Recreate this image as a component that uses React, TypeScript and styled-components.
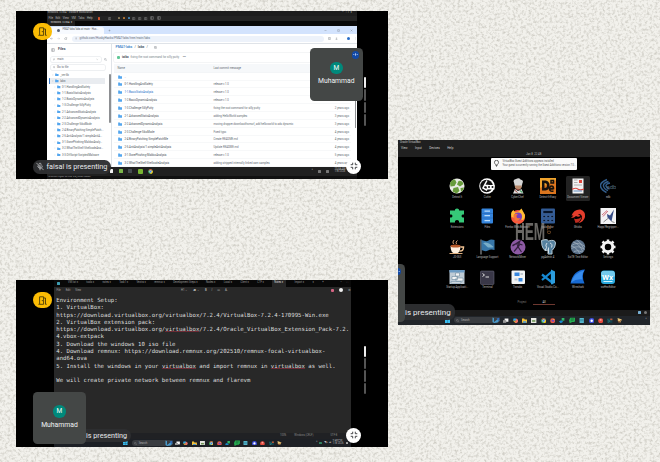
import React from "react";
import styled, { createGlobalStyle } from "styled-components";

const Global = createGlobalStyle`
  * { box-sizing: border-box; }
  body { margin: 0; background: #efefe9; font-family: Roboto, "Open Sans", sans-serif; }
`;

/* ---------- page ---------- */
const Page = styled.main`
  position: relative; width: 660px; height: 462px; overflow: hidden;
  display: flex; align-items: flex-start; gap: 10px; padding: 11px 10px 0 16px;
`;
const Paper = styled.svg`position: absolute; inset: 0; width: 660px; height: 462px;`;
const Column = styled.div`display: flex; flex-direction: column; gap: 101px; width: 372px; position: relative;`;
const Side = styled.div`width: 252px; margin-top: 129px; position: relative;`;
const Screen = styled.section<{ $h: number; $l?: number; $r?: number }>`
  position: relative; overflow: hidden; background: #000; height: ${(p) => p.$h}px;
  padding: 0 ${(p) => p.$r ?? 0}px 0 ${(p) => p.$l ?? 0}px; display: flex; flex-direction: column;
`;
const Bar = styled.div<{ $h: number; $bg?: string; $pl?: number; $gap?: number; $c?: string; $fs?: number }>`
  display: flex; align-items: center; flex: none; white-space: nowrap; overflow: hidden;
  height: ${(p) => p.$h}px; background: ${(p) => p.$bg ?? "transparent"};
  padding-left: ${(p) => p.$pl ?? 0}px; gap: ${(p) => p.$gap ?? 3}px;
  color: ${(p) => p.$c ?? "#b5b5b5"}; font-size: ${(p) => p.$fs ?? 2.6}px; line-height: 1;
`;
const Grow = styled.span`flex: 1;`;
const Space = styled.span<{ $w: number }>`width: ${(p) => p.$w}px; flex: none;`;

/* ---------- meeting overlays ---------- */
const DoorBadge = styled.div<{ $top: number }>`
  position: absolute; left: 17px; top: ${(p) => p.$top}px; width: 18.5px; height: 16.5px;
  border-radius: 8.2px; background: #fbbc04; display: grid; place-items: center;
`;
const Tile = styled.div<{ $x: number; $y: number }>`
  position: absolute; left: ${(p) => p.$x}px; top: ${(p) => p.$y}px; width: 52.5px; height: 52.5px;
  border-radius: 4.5px; background: #444746; display: flex; flex-direction: column; align-items: center;
  padding-top: 13.8px; gap: 2.8px; color: #f1f3f4; font-size: 6.8px; line-height: 9px;
`;
const Avatar = styled.div`
  width: 12.5px; height: 12.5px; border-radius: 50%; background: #00897b; color: #fff;
  display: grid; place-items: center; font-size: 6.5px; line-height: 1;
`;
const Speaking = styled.div<{ $x: number; $y: number }>`
  position: absolute; left: ${(p) => p.$x}px; top: ${(p) => p.$y}px; width: 7.5px; height: 7.5px; border-radius: 50%;
  background: #134aa5; display: grid; place-items: center;
`;
const Presenting = styled.div<{ $x: number; $y: number; $w: number; $h: number; $pl: number; $fs: number }>`
  position: absolute; left: ${(p) => p.$x}px; top: ${(p) => p.$y}px; width: ${(p) => p.$w}px; height: ${(p) => p.$h}px;
  padding-left: ${(p) => p.$pl}px; border-radius: 6.5px; background: rgba(46,47,49,.96); color: #e8eaed;
  display: flex; align-items: center; gap: 3px; font-size: ${(p) => p.$fs}px; white-space: nowrap;
`;
const Collapse = styled.div<{ $top: number }>`
  position: absolute; left: 330.3px; top: ${(p) => p.$top}px; width: 15px; height: 15px; border-radius: 50%;
  background: #fff; display: grid; place-items: center;
`;
const Levels = styled.div<{ $top: number }>`
  position: absolute; left: 347.5px; top: ${(p) => p.$top}px; display: flex; flex-direction: column; gap: 1px;
  i { width: 2px; height: 11.4px; border-radius: 1px; background: #555; } i:first-child { background: #eee; }
`;

const Door = () => (
  <svg width="9" height="9" viewBox="0 0 9 9" fill="none" stroke="#4a3b08" strokeWidth=".9">
    <path d="M.4 8.3h1.2V.8h4V8.3M5.6 2h1.9v6.3h1.2M1.6 8.3h4M4.3 4v1.2" />
  </svg>
);
const MicOff = () => (
  <svg width="8" height="9" viewBox="0 0 24 24" fill="none" stroke="#d5d7da" strokeWidth="2" strokeLinecap="round">
    <path d="M2 2l20 20M9 5a3 3 0 0 1 6 0v6M9 9v3a3 3 0 0 0 4 2.8M5 11a7 7 0 0 0 10.5 6M19 11a7 7 0 0 1-.6 3M12 18v4" />
  </svg>
);
const CollapseIcon = () => (
  <svg width="8" height="8" viewBox="0 0 8 8" fill="none" stroke="#3c3d40" strokeWidth=".95">
    <path d="M.7 2.7h2v-2M5.3.7v2h2M.7 5.3h2v2M7.3 5.3h-2v2" />
  </svg>
);
const SpeakingDot = ({ x, y }: { x: number; y: number }) => (
  <Speaking $x={x} $y={y}><svg width="5" height="3" viewBox="0 0 5 3"><path d="M.8 1v1M2.5.3v2.4M4.2 1v1" stroke="#cfe0ff" strokeWidth=".8" /></svg></Speaking>
);
const Participant = ({ x, y }: { x: number; y: number }) => (
  <Tile $x={x} $y={y}><Avatar>M</Avatar><span>Muhammad</span></Tile>
);
const VolumeLevels = ({ top }: { top: number }) => <Levels $top={top}><i /><i /><i /><i /></Levels>;

/* ---------- small glyphs ---------- */
const Dot = styled.span<{ $c: string; $s?: number; $r?: number }>`
  width: ${(p) => p.$s ?? 3}px; height: ${(p) => p.$s ?? 3}px; background: ${(p) => p.$c};
  border-radius: ${(p) => p.$r ?? 0.5}px; flex: none;
`;
const Stroke = ({ d, s = 3.4, c = "#6a7077", w = 2.5 }: { d: string; s?: number; c?: string; w?: number }) => (
  <svg width={s} height={s} viewBox="0 0 24 24" fill="none" stroke={c} strokeWidth={w}><path d={d} /></svg>
);
const Folder = ({ s = 4.2 }: { s?: number }) => (
  <svg width={s} height={s} viewBox="0 0 10 10"><path d="M.4 1.4h3.8l1 1.3h4.4v6.4H.4z" fill="#54a6ee" /></svg>
);
const SEARCH = "M16 16l6 6M10 3a7 7 0 1 1 0 14a7 7 0 0 1 0-14";
const CLOSE = "M5 5l14 14M19 5L5 19";
const CHEVRON = "M9 5l7 7-7 7";
const DOWN = "M5 9l7 7 7-7";
const BOX = "M4 4h16v16H4zM10 4v16";

/* ---------- browser ---------- */
const Browser = styled.div`height: 141px; background: #fff; display: flex; flex-direction: column; overflow: hidden;`;
const Tab = styled.div`
  height: 7px; width: 54px; flex: none; margin-top: 1.5px; border-radius: 2.5px 2.5px 0 0; background: #f7faff;
  display: flex; align-items: center; gap: 3px; padding: 0 4px 0 7px; color: #4d5560; font-size: 2.6px; white-space: nowrap;
`;
const Address = styled.div`
  display: flex; align-items: center; width: 254px; height: 6px; border-radius: 3px; background: #edf2fa;
  padding-left: 3px; gap: 2px; color: #667080; font-size: 3.05px;
`;
const BrowserBody = styled.div`flex: 1; display: flex; border-top: .5px solid #dfe3e8; min-height: 0;`;
const Sidebar = styled.div`
  width: 65px; border-right: .5px solid #dfe3e8; display: flex; flex-direction: column; overflow: hidden; position: relative;
`;
const Field = styled.div<{ $w?: number }>`
  width: ${(p) => p.$w ?? 50}px; height: 5.5px; box-shadow: 0 0 0 .5px #dde1e6; border-radius: 1px;
  display: flex; align-items: center; gap: 2px; padding: 0 2px; font-size: 2.9px; color: #626a73;
`;
const TreeRow = styled.div<{ $on?: boolean; $d?: number }>`
  height: 6.17px; flex: none; margin: 0 6px 0 2px; padding-left: ${(p) => (p.$d ? 4 : 2)}px;
  background: ${(p) => (p.$on ? "#e9ecf0" : "transparent")}; border-left: .8px solid ${(p) => (p.$on ? "#3577c8" : "transparent")};
  display: flex; align-items: center; gap: 1.5px; font-size: 2.75px; color: #555c65; white-space: nowrap; border-radius: .5px;
`;
const Scroll = styled.span<{ $x: number; $y: number; $h: number }>`
  position: absolute; left: ${(p) => p.$x}px; top: ${(p) => p.$y}px; width: 1.8px; height: ${(p) => p.$h}px; border-radius: 1px; background: #8d8f92;
`;
const Content = styled.div`flex: 1; min-width: 0; padding: 0 6px 0 2px; display: flex; flex-direction: column; position: relative;`;
const Crumb = styled.div`height: 9px; padding: 0 0 2px 2px; display: flex; align-items: center; gap: 2px; font-size: 3.5px; color: #55606c; b { color: #3578c4; font-weight: 500; }`;
const Commit = styled.div`
  height: 9px; box-shadow: 0 0 0 .5px #e9ebee; border-radius: 1px; display: flex; align-items: center; gap: 2px;
  padding-left: 3px; font-size: 2.9px; color: #777f88; b { color: #454c54; }
`;
const FileRow = styled.div<{ $head?: boolean }>`
  height: ${(p) => (p.$head ? 8.4 : 7.86)}px; flex: none; box-shadow: inset 0 -.5px #f0f1f4; background: ${(p) => (p.$head ? "#f6f8fa" : "transparent")};
  display: grid; grid-template-columns: ${(p) => (p.$head ? "96px" : "7px 89px")} 1fr auto; align-items: center;
  padding: 0 2px 0 4px; font-size: 2.78px; color: #646b73; white-space: nowrap;
`;
const FileName = styled.span<{ $link?: boolean }>`
  color: ${(p) => (p.$link ? "#2871c9" : "#4b525a")};
`;

const files: [string, string, string][] = [
  ["0-1.HandlingAndSafety", "release v.1.0", ""],
  ["1-1.BasicStaticAnalysis", "release v.1.0", ""],
  ["1-2.BasicDynamicAnalysis", "release v.1.0", ""],
  ["1-3.Challenge-SillyPutty", "fixing the root command for silly putty", "2 years ago"],
  ["2-1.AdvancedStaticAnalysis", "adding HelloWorld samples", "3 years ago"],
  ["2-2.AdvancedDynamicAnalysis", "moving dropper.downloadfromurl, add helloworld to ads dynamic", "3 years ago"],
  ["2-3.Challenge-SikoMode", "Fixed typo", "4 years ago"],
  ["2-4.BinaryPatching-SimplePatchMe", "Create README.md", "4 years ago"],
  ["2-5.AntiAnalysis/1.simpleAntiAnalysis", "Update README.md", "4 years ago"],
  ["3-1.GonePhishing-MaldocAnalysis", "release v.1.0", "5 years ago"],
  ["3-2.WhatTheShell-ShellcodeAnalysis", "adding stripped internally linked asm samples", "4 years ago"],
];
const tree = ["0-1.HandlingAndSafety", "1-1.BasicStaticAnalysis", "1-2.BasicDynamicAnalysis", "1-3.Challenge-SillyPutty",
  "2-1.AdvancedStaticAnalysis", "2-2.AdvancedDynamicAnalysis", "2-3.Challenge-SikoMode", "2-4.BinaryPatching-SimplePatch...",
  "2-5.AntiAnalysis/1.simpleAntiA...", "3-1.GonePhishing-MaldocAnaly...", "3-2.WhatTheShell-ShellcodeAna...", "3-3.OffScript-ScriptedMalware"];

const GithubScreen = () => (
  <Screen $h={168} $l={30.5} $r={31}>
    <Bar $h={4.5} $bg="#1d1d1d" $pl={1} $fs={2.6}>Windows 10 x64 - VMware Workstation<Grow />– &nbsp; ❐ &nbsp; ×<Space $w={2} /></Bar>
    <Bar $h={5.5} $bg="#232323" $pl={2} $gap={2.6} $fs={2.8}>
      <span>File</span><span>Edit</span><span>View</span><span>VM</span><span>Tabs</span><span>Help</span><Space $w={0} />
      <Dot $c="#d0532b" $s={2.6} /><Space $w={2} /><Stroke d={BOX} c="#aaa" /><Space $w={2} />
      <Dot $c="#8a7a58" $s={2} /><Dot $c="#b47533" $s={2.2} /><Dot $c="#4384b5" $s={2.2} />
      <Stroke d={BOX} c="#aaa" /><Stroke d={BOX} c="#aaa" /><Stroke d={BOX} c="#aaa" /><Stroke d={BOX} c="#aaa" s={4} /><Stroke d={BOX} c="#aaa" s={4} />
    </Bar>
    <Bar $h={5} $bg="#080808"><Bar $h={5} $bg="#202020" $pl={4} $c="#ddd" $fs={2.6}>Windows 10 x64 &nbsp;×<Space $w={0} /></Bar></Bar>
    <Browser>
      <Bar $h={8} $bg="#d3e3fd" $pl={3} $gap={4}>
        <Tab><Dot $c="#596579" $s={3} $r={2} />FMAT-labs/labs at main · Hus...<Grow /><Stroke d={CLOSE} s={2.6} /></Tab>
        <Stroke d="M12 4v16M4 12h16" s={3} /><Grow /><Stroke d="M4 12h16" s={3} /><Space $w={2} /><Stroke d="M5 5h14v14H5z" s={3} /><Space $w={2} /><Stroke d={CLOSE} s={3} /><Space $w={0} />
      </Bar>
      <Bar $h={9} $pl={3.5} $gap={4}>
        <Stroke d="M21 12H4M11 5l-7 7 7 7" s={3.2} /><Stroke d="M3 12h17M13 5l7 7-7 7" s={3.2} c="#adb2b9" /><Stroke d="M19 8a8 8 0 1 0 1 7M20 3v6h-6" s={3.4} />
        <Address><Stroke d="M3 8h18M3 16h18" s={2.8} />github.com/HuskyHacks/PMAT-labs/tree/main/labs</Address>
        <Stroke d={BOX} s={3} /><Stroke d="M12 3v13M6 11l6 6 6-6M4 21h16" s={3} /><Space $w={1} /><Dot $c="#286cc7" $s={3.3} $r={2} /><Stroke d="M12 3v3M12 10v3M12 18v3" s={3} />
      </Bar>
      <BrowserBody>
        <Sidebar>
          <Bar $h={11.5} $pl={4.5} $c="#444b53" $fs={3.6}><Stroke d={BOX} s={4} /><b>Files</b></Bar>
          <Bar $h={8} $pl={4} $gap={3}><Field><Stroke d="M6 4v16M17 4v5l-11 6" s={2.8} />main<Grow /><Stroke d={DOWN} s={2.5} /></Field><Stroke d={SEARCH} s={3} /></Bar>
          <Bar $h={8} $pl={4}><Field $w={54}><Stroke d={SEARCH} s={2.6} />Go to file</Field></Bar>
          <TreeRow><Stroke d={CHEVRON} s={2} /><Folder s={3.7} />_vm-lib</TreeRow>
          <TreeRow $on><Stroke d={DOWN} s={2} /><Folder s={3.7} />labs</TreeRow>
          {tree.map((t) => <TreeRow key={t} $d={1}><Stroke d={CHEVRON} s={2} c="#999" /><Folder s={3.5} />{t}</TreeRow>)}
          <Scroll $x={62.3} $y={30} $h={49} />
        </Sidebar>
        <Content>
          <Crumb><b>PMAT-labs</b> / <strong>labs</strong> / <Space $w={2} /><Stroke d="M8 8h13v13H8zM3 16V3h13" s={3.6} /></Crumb>
          <Commit><Dot $c="#62c797" $s={3.6} $r={1} /><b>taiko</b> fixing the root command for silly putty &nbsp;<b>•••</b></Commit>
          <Bar $h={2.5} />
          <FileRow $head><span>Name</span><span>Last commit message</span><span>Last commit date</span></FileRow>
          <FileRow><Folder /><span>..</span></FileRow>
          {files.map(([n, m, d], i) => <FileRow key={n}><Folder /><FileName $link={i === 1}>{n}</FileName><span>{m}</span><span>{d}</span></FileRow>)}
          <Scroll $x={243.2} $y={48} $h={36} />
        </Content>
      </BrowserBody>
    </Browser>
    <Bar $h={8.5} $bg="#202020" $pl={63} $gap={5.5}>
      <Dot $c="#f2f2f2" $s={3.8} /><Dot $c="#7cb64b" $s={4} /><Dot $c="#454b50" $s={4} />
      <Dot $c="#79b532" $s={5} $r={1} /><Chrome s={5} />
      <Grow /><span>^</span><Dot $c="#777" $s={2.5} /><Dot $c="#777" $s={2.5} /><span>10:58 AM<br />1/8/2026</span><Space $w={6} />
    </Bar>
    <Bar $h={3.5} $bg="#111" $pl={1} $fs={2.6}>To direct input to this VM, click inside.</Bar>
    <DoorBadge $top={12}><Door /></DoorBadge>
    <Participant x={294} y={37} /><SpeakingDot x={335.8} y={40} />
    <VolumeLevels top={66} />
    <Presenting $x={16.5} $y={148.5} $w={78} $h={14} $pl={3} $fs={7.25}><MicOff />faisal is presenting</Presenting>
    <Collapse $top={147.8}><CollapseIcon /></Collapse>
  </Screen>
);

/* ---------- taskbar icons ---------- */
function Chrome({ s = 5 }: { s?: number }) {
  return <svg width={s} height={s} viewBox="0 0 20 20"><circle cx="10" cy="10" r="9.5" fill="#34a853" /><path d="M1.6 5.4A9.6 9.6 0 0 1 18.6 6H10z" fill="#ea4335" /><path d="M18.8 6A9.6 9.6 0 0 1 9 19.5L14 10z" fill="#fbbc04" /><circle cx="10" cy="10" r="4.5" fill="#4285f4" stroke="#fff" strokeWidth="1.6" /></svg>;
}
const Windows = ({ s }: { s: number }) => (
  <svg width={s} height={s} viewBox="0 0 9 9" fill="#38bdf0"><path d="M0 0h4.3v4.3H0zM4.7 0H9v4.3H4.7zM0 4.7h4.3V9H0zM4.7 4.7H9V9H4.7z" /></svg>
);
const Dock = styled.div<{ $gap: number }>`display: flex; align-items: center; gap: ${(p) => p.$gap}px; svg { display: block; }`;
const SearchBox = styled.div<{ $w: number }>`
  width: ${(p) => p.$w}px; height: 6px; border-radius: 3px; background: #393c40; display: flex; align-items: center; gap: 2px; padding-left: 2px; color: #aaa; font-size: 2.8px;
`;
const DockIcons = ({ s, gap }: { s: number; gap: number }) => (
  <Dock $gap={gap}>
    <svg width={s} height={s} viewBox="0 0 10 10"><path d="M3 1h7v6H3z" fill="#f3f3f3" /><path d="M0 4h6v5H0z" fill="#999" /></svg>
    <svg width={s} height={s} viewBox="0 0 10 10"><path d="M1 1h5l1 4H0z" fill="#29a7ed" /><path d="M6 1l4 3-2 5-5 1z" fill="#ed6f66" /><path d="M0 5h5l-1 4z" fill="#ddb52f" /></svg>
    <svg width={s} height={s} viewBox="0 0 10 10"><path d="M0 1h4l1 2h5v6H0z" fill="#f5c13a" /><path d="M2 6h6v3H2z" fill="#4a99d8" /></svg>
    <svg width={s} height={s} viewBox="0 0 10 10"><path d="M0 0h10v10H0z" fill="#e5e6df" /><path d="M2 4h6v3H2z" fill="#6d9555" /></svg>
    <Chrome s={s} />
    <svg width={s} height={s} viewBox="0 0 10 10"><circle cx="5" cy="5" r="4.6" fill="#ef5942" /><circle cx="5.5" cy="4.5" r="2.4" fill="#7546bc" /><path d="M1 1l3 2 5-1-2 2z" fill="#ffb637" /></svg>
    <svg width={s} height={s} viewBox="0 0 10 10"><path d="M5 0h5v5H5z" fill="#2fb66a" /><path d="M0 6l4-2 4 3-5 3z" fill="#1989cb" /></svg>
    <svg width={s + 1} height={s + 1} viewBox="0 0 10 10"><path d="M2 1h8v5L8 8H5L1 10 0 5z" fill="#25ad51" /><path d="M3 3h5M3 5h4" stroke="#145c31" /></svg>
    <svg width={s} height={s} viewBox="0 0 10 10"><path d="M1 0h8v10H1z" fill="#56b6cd" /><path d="M2 3h6M2 5h6" stroke="#287b91" /></svg>
    <svg width={s} height={s} viewBox="0 0 10 10"><circle cx="5" cy="5" r="5" fill="#3b4cdd" /><circle cx="5" cy="5" r="2.3" fill="#fff" /></svg>
    <svg width={s} height={s} viewBox="0 0 10 10"><circle cx="5" cy="5" r="4.7" fill="#e64a3d" /><circle cx="5" cy="3.5" r="1.8" fill="#f2a39c" /></svg>
    <svg width={s} height={s} viewBox="0 0 10 10"><path d="M0 1h10v8H0z" fill="#12424c" /><path d="M6 1h4v3H6z" fill="#c15532" /><path d="M2 3l3 3-3 2" stroke="#4cb3ac" fill="none" /></svg>
    <svg width={s} height={s} viewBox="0 0 10 10"><path d="M1 0l8 3-2 4-5-1z" fill="#e6c577" /><path d="M3 9l5-6M1 5l6 4" stroke="#9a6034" strokeWidth="1.5" /></svg>
  </Dock>
);
const Bing = () => <svg width="8" height="6" viewBox="0 0 16 12"><path d="M1 1l3 1v8l4-3 5-4 2 4-4 4-7 1-3-2z" fill="#4999c9" /><path d="M9 3l6-2-1 8z" fill="#3069b4" /></svg>;

/* ---------- notepad ---------- */
const NoteBody = styled.div`
  height: 139.5px; background: #282828; padding: 3.5px 0 0 2.3px; color: #dedede; overflow: hidden; white-space: pre;
  font-family: "DejaVu Sans Mono", "Liberation Mono", monospace; font-size: 5.66px; line-height: 7.28px;
`;
const Typo = styled.span`background: linear-gradient(#8c2c3c, #8c2c3c) 0 100% / 100% .7px no-repeat;`;
const noteTabs = ["VM list  ×", "tools  ×", "notes  ×", "Task1  ×", "Vectra  ×", "remnux  ×", "Development Steps  ×", "Nodes  ×", "Local  ×", "Client  ×", "CTF  ×"];
const NotepadScreen = () => (
  <Screen $h={167} $l={38} $r={37}>
    <Bar $h={7} $bg="#090909" $pl={2.5} $gap={8.3} $c="#969696" $fs={2.6}>
      <Dot $c="#3e9cb1" $s={3.2} />{noteTabs.map((t) => <span key={t}>{t}</span>)}
      <Bar $h={7} $bg="#272727" $pl={2} $c="#ddd" $fs={2.6}>Notes ×<Space $w={0} /></Bar><span>Import ×</span><span>×</span><span>+</span><Grow /><span>–&nbsp; &nbsp; &nbsp; &nbsp;□&nbsp; &nbsp; &nbsp; &nbsp;×&nbsp; &nbsp; &nbsp;</span>
    </Bar>
    <Bar $h={6.5} $bg="#282828" $pl={2.5} $gap={5} $c="#aaa" $fs={2.7}>
      <span>File</span><span>Edit</span><span>View</span><Space $w={90} /><span>H1 ⌄</span><span>≔ ⌄</span><b>B</b><i>I</i><span>∞</span><span>A̶</span>
      <Grow /><Dot $c="#d66483" $s={3.3} $r={1} /><Dot $c="#f1f1f1" $s={4} $r={3} /><span>⚙</span>
    </Bar>
    <NoteBody>
{`Environment Setup:
1. VirtualBox:
https://download.virtualbox.org/virtualbox/7.2.4/VirtualBox-7.2.4-170995-Win.exe
2. VirtualBox extension pack:
https://download.virtualbox.org/`}<Typo>virtualbox</Typo>{`/7.2.4/Oracle_VirtualBox_Extension_Pack-7.2.
4.vbox-extpack
3. Download the windows 10 iso file
4. Download remnux: https://download.remnux.org/202510/remnux-focal-virtualbox-
and64.ova
5. Install the windows in your `}<Typo>virtualbox</Typo>{` and import remnux in `}<Typo>virtualbox</Typo>{` as well.

We will create private network between remnux and flarevm`}
    </NoteBody>
    <Bar $h={6} $bg="#202124" $pl={226} $gap={8} $c="#898989" $fs={2.6}><span>100%</span><span>Windows (CRLF)</span><Space $w={1} /><span>UTF-8</span></Bar>
    <Bar $h={8} $bg="#1d2025" $pl={5} $gap={2}>
      <Dot $c="#c9572d" $s={2.5} /><span>34°C</span><Space $w={50} /><Windows s={4.6} /><Space $w={0} />
      <SearchBox $w={41}><Stroke d={SEARCH} s={3} c="#aaa" />Search<Grow /><Bing /></SearchBox>
      <DockIcons s={4.9} gap={3.58} /><Grow /><span>^</span><Dot $c="#318261" $s={2.5} /><span>◥ ◖ ▰</span><span>9:48 PM<br />1/8/2026</span><Dot $c="#aaa" $s={2.5} /><Space $w={1} />
    </Bar>
    <DoorBadge $top={11.8}><Door /></DoorBadge>
    <VolumeLevels top={65.5} />
    <Presenting $x={17} $y={148.8} $w={97.5} $h={13.5} $pl={53} $fs={7.2}>is presenting</Presenting>
    <Participant x={17.2} y={111.7} />
    <Collapse $top={147.8}><CollapseIcon /></Collapse>
  </Screen>
);

/* ---------- virtual machine launcher ---------- */
const Desktop = styled.div`position: relative; height: 153px; background: #000; padding: 19.2px 0 0 44.1px;`;
const Apps = styled.div`display: grid; grid-template-columns: repeat(6, 30.2px); grid-auto-rows: 30.2px;`;
const Launcher = styled.div<{ $on?: boolean }>`
  display: flex; flex-direction: column; align-items: center; gap: 1.4px; color: #bbb; font-size: 2.7px; line-height: 3.5px; white-space: nowrap;
  padding-top: 2px; margin: 0 3px; height: 24.5px; border-radius: 1.5px; background: ${(p) => (p.$on ? "#222" : "transparent")};
  svg { display: block; }
`;
const Watermark = styled.div`
  position: absolute; left: 116.5px; top: 62px; color: rgba(160,157,152,.66); font: 700 24px/26px "Liberation Sans", sans-serif;
  letter-spacing: -.3px; transform: scaleX(.57); transform-origin: left; white-space: nowrap;
`;
const WatermarkSide = styled.span`position: absolute; left: 147.5px; top: 68px; color: #80532b; font: 700 5px/5px Roboto, sans-serif; writing-mode: vertical-rl; opacity: .9;`;
const Notice = styled.div`
  position: absolute; left: 93px; top: .5px; width: 85.5px; height: 12.2px; border-radius: 1px; background: #fafafa; color: #555;
  display: flex; align-items: center; gap: 3px; padding-left: 1.5px; font-size: 2.6px; line-height: 4px; white-space: nowrap;
`;
const Pages = styled.div`
  position: absolute; left: 113px; top: 142.5px; width: 44px; display: grid; grid-template-columns: 1fr 1fr; text-align: center; color: #777; font-size: 2.8px; line-height: 4px;
  span:last-child { color: #ddd; box-shadow: 0 .8px #8a463c; }
`;
const EdgeTile = styled.div`position: absolute; left: -10px; top: 123.5px; width: 16.5px; height: 58px; background: #444746; border-radius: 4.5px; z-index: 0;`;

const Art = ({ children }: { children: React.ReactNode }) => <svg width="16" height="16" viewBox="0 0 32 32">{children}</svg>;
const apps: [string, React.ReactNode][] = [
  ["Detect It", <><circle cx="16" cy="16" r="15" fill="#e9ebe4" /><path d="M2 10q4-8 10-7l3 6-4 7-8 1zM19 6q7-2 10 6l-7 5-6-4zM9 20l9-2 3 8-6 5-8-4zM23 20l7-1q-1 7-6 9z" fill="#689b3b" /></>],
  ["Cutter", <><circle cx="16" cy="16" r="15.5" fill="#fff" /><circle cx="15" cy="16" r="12.5" fill="#111" /><path d="M16 5L8 20l7 4 2-4M12 15h7" stroke="#fff" strokeWidth="3" fill="none" /><path d="M14 14h17v9H17z" fill="#fff" /><circle cx="20" cy="18" r="2" fill="#111" /><circle cx="27" cy="18" r="2" fill="#111" /></>],
  ["CyberChef", <><path d="M8 9q-3-6 4-7q6-3 9 1q7 1 4 7l-2 8H10z" fill="#d5d5d5" /><path d="M10 15h13v5q-6 6-13 0z" fill="#b98b6d" /><path d="M6 31l4-9 6 4 7-4 4 9z" fill="#ddd" /><path d="M12 22l8 2M9 24l6 5" stroke="#a14c42" strokeWidth="2" /><path d="M20 25l5 4" stroke="#50a46b" strokeWidth="3" /></>],
  ["Detect-It-Easy", <><path d="M0 0h32v32H0z" fill="#f1a42d" /><path d="M0 20L32 4v28H0z" fill="#dc751e" /><path d="M4 5h7q8 1 8 10t-8 10H4zM9 10v10q5 0 5-5t-5-5" fill="#15110d" fillRule="evenodd" /><path d="M27 22H19q0-6 4-6t4 5H19q0 7 8 5M22 5h5v5h-5z" fill="none" stroke="#15110d" strokeWidth="3" /></>],
  ["Document Viewer", <><path d="M5 1h22v30H5z" fill="#f2f2f2" /><path d="M8 4h7M8 9h7M8 14h16" stroke="#999" strokeWidth="1.5" /><path d="M18 4h6v6h-6z" fill="#df473d" /><path d="M4 21q9-3 12 0t12 0v3q-10 2-13-1t-11 1z" fill="#d54b46" /><path d="M7 25h17v2H7z" fill="#638fc0" /></>],
  ["edb", <><path d="M14 3Q0 9 1 16t12 13M17 7Q6 10 7 16t9 9M20 10q-9 2-8 6t7 6" fill="none" stroke="#315c8b" strokeWidth="3" /><text x="13" y="21" fontSize="12" fontFamily="Roboto" fill="#52677c">edb</text></>],
  ["Extensions", <path d="M2 5h10V3q4-4 8 0v2h10v8h-3q-4 3 0 6h3v10H20v-3q-4-4-8 0v3H2V19h3q4-3 0-6H2z" fill="#36c978" />],
  ["Files", <><rect x="5" y="1" width="23" height="30" rx="2" fill="#3584dc" /><path d="M11 6h11M11 15h11M11 25h11" stroke="#b9dbfb" strokeWidth="2.5" /><path d="M5 11h23M5 20h23" stroke="#245da9" /></>],
  ["Firefox Web Browser", <><circle cx="16" cy="18" r="14" fill="#f8583b" /><path d="M3 18Q0 8 7 4l3 5 7-2 6-6 7 13q0 8-4 10" fill="#ffbd35" /><circle cx="16" cy="17" r="8" fill="#7840bd" /><path d="M7 18q-1-8 9-6-4 2-3 6t8 2q-3 8-11 5z" fill="#f47538" /></>],
  ["galculator", <><rect x="2" y="1" width="28" height="30" rx="2" fill="#315b96" /><path d="M6 5h20v6H6zM6 15h5v4H6zM14 15h5v4h-5zM22 15h5v4h-5zM6 23h5v4H6zM14 23h5v4h-5zM22 23h5v4h-5z" fill="#07152b" stroke="#5177ad" /></>],
  ["Ghidra", <><path d="M3 15Q8 2 21 3q11 4 9 15-3 11-14 12 8-5 8-12-1-7-8-6l5 4q-5 3-9 0-3 4-10 4l5-5z" fill="#e53d2c" /><path d="M8 21q8 3 15-3-2 11-12 12z" fill="#bd2b20" /></>],
  ["Hopp/Regripper...", <><path d="M1 0h31v32H1z" fill="#f3f3f5" /><path d="M4 14l10-9M6 17l10-11" stroke="#c34855" strokeWidth="1.5" /><path d="M14 12l6 3 8-12-3 14-2 10-8-8z" fill="#354c86" /><path d="M7 28l10-8M23 27l6 2" stroke="#666" strokeWidth="1.5" /></>],
  ["JD-GUI", <><path d="M3 14h20q0 15-10 15T3 14" fill="#fff0df" /><path d="M23 16h6q0 9-8 8" fill="none" stroke="#f1c393" strokeWidth="3" /><ellipse cx="13" cy="14" rx="10" ry="3" fill="#b85a2a" /><path d="M9 10q-3-4 1-8M15 10q-3-4 2-7" stroke="#cf9c72" fill="none" strokeWidth="2" /><path d="M1 29h26" stroke="#ddad7e" strokeWidth="2" /></>],
  ["Language Support", <><path d="M4 1v30" stroke="#a2a9ae" strokeWidth="2" /><path d="M5 2q10 4 14 1t12-1v20q-8-2-13 1T5 22z" fill="#3776a8" /><path d="M8 8q7-3 14 2t7 6-11 1z" fill="#79aec9" /></>],
  ["NetworkMiner", <><circle cx="16" cy="16" r="15" fill="#8d5aa4" /><path d="M5 14L20 4l-5 10 8 12M8 25L19 12M5 13q7-6 20-1" fill="none" stroke="#33203d" strokeWidth="2.4" /></>],
  ["pgAdmin 4", <><path d="M3 3q11-4 14 1 13-4 14 4 0 9-7 15v7h-8v-8q-8 4-12-9z" fill="#55819f" stroke="#b5c9d4" strokeWidth="2" /><path d="M14 8q-4 4-1 9l-3 7M20 8q6 2 3 9M17 17v11" stroke="#d3e0e8" strokeWidth="2" fill="none" /></>],
  ["SciTE Text Editor", <><circle cx="16" cy="16" r="14.5" fill="#5a7089" /><path d="M3 13q13-9 27 2M3 19q13-8 26 2M8 25q8-4 16 1M6 6q12 2 20 20M2 14q9 0 18 16M13 2q8 3 15 18" stroke="#a5b4c2" strokeWidth="1.4" fill="none" /></>],
  ["Settings", <><circle cx="16" cy="16" r="9.5" fill="none" stroke="#f2f2f2" strokeWidth="6" /><path d="M16 1v5M16 26v5M1 16h5M26 16h5M5 5l4 4M23 23l4 4M5 27l4-4M23 9l4-4" stroke="#f2f2f2" strokeWidth="5" /></>],
  ["Startup Applicati...", <><path d="M1 2h30v28H1z" fill="#bfcbd5" /><path d="M1 2h30v5H1z" fill="#6c9bc3" /><path d="M13 8h8v6h-8zM6 15h11v6H6zM14 18h14v6H14zM4 25h20v3H4z" fill="#f5f5f5" stroke="#597a93" /></>],
  ["Terminal", <><rect x="3" y="4" width="27" height="27" rx="2" fill="#393747" stroke="#737085" /><path d="M7 9l4 3-4 3M13 16h7" stroke="#ddd" strokeWidth="2" fill="none" /></>],
  ["Tweaks", <><rect x="3" y="3" width="27" height="27" rx="2" fill="#f2f4f5" /><path d="M9 7h10v7H9zM17 18h8v7h-8z" fill="#3887df" /><path d="M21 10h5M9 21h6" stroke="#c1c8cf" strokeWidth="4" /></>],
  ["Visual Studio Co...", <><path d="M24 5v22L4 11M24 5L4 22" fill="none" stroke="#1688d1" strokeWidth="4.5" /><path d="M22 1l8 4v23l-8 3z" fill="#2c9ddd" /></>],
  ["Wireshark", <><path d="M1 29Q6 2 30 1q-8 12-1 28z" fill="#1769d2" /><path d="M2 27Q9 7 28 3q-6 11-3 18-12-2-23 6" fill="#3a8dec" /></>],
  ["wxHexEditor", <><rect x="2" y="3" width="28" height="27" rx="6" fill="#2aa8dc" /><path d="M5 4h22l3 5v6H2V8z" fill="#72c9ec" /><text x="4" y="21" fontSize="16" fontWeight="700" fontFamily="Roboto" fill="#fff">Wx</text><path d="M7 25h18" stroke="#d2f3ff" strokeWidth="2" /></>],
];

const LauncherScreen = () => (
  <Screen $h={185}>
    <Bar $h={5.5} $bg="#202020" $pl={2} $c="#c3c3c3" $fs={2.7}>Oracle VirtualBox</Bar>
    <Bar $h={6.5} $bg="#202020" $pl={3} $gap={7.5} $c="#ccc" $fs={3}><span>View</span><span>Input</span><span>Devices</span><span>Help</span></Bar>
    <Bar $h={5} $bg="#202020" $pl={128} $fs={2.8}>Jan 8 &nbsp;22:48</Bar>
    <Desktop>
      <Apps>{apps.map(([name, art], i) => <Launcher key={name} $on={i === 4}><Art>{art}</Art><span>{name}</span></Launcher>)}</Apps>
      <Watermark>HEM</Watermark><WatermarkSide>ZLO</WatermarkSide>
      <Notice><Stroke d="M9 15q-4-3-4-7a7 7 0 0 1 14 0q0 4-4 7v3H9zM12 18v5" s={7} c="#333" /><span>VirtualBox Guest Additions appears installed<br />Your guest is currently running the Guest Additions version 7.0...</span></Notice>
      <Pages><span>Project</span><span>All</span></Pages>
    </Desktop>
    <Bar $h={5.5} $bg="#1b1b1b"><Grow /><Dot $c="#78afd3" $s={3.2} /><Dot $c="#777" $s={3} $r={2} /><Space $w={0} /></Bar>
    <Bar $h={9.5} $bg="#21252a" $pl={47.3} $gap={3.5}>
      <Windows s={5} /><SearchBox $w={46}><Stroke d={SEARCH} s={3.2} c="#aaa" />Search<Grow /><Bing /></SearchBox>
      <DockIcons s={5.4} gap={3.98} /><Grow /><span>^</span><Space $w={0} />
    </Bar>
    <Presenting $x={-6} $y={164} $w={63} $h={16} $pl={13} $fs={8}>is presenting</Presenting>
    <EdgeTile /><SpeakingDot x={-4.2} y={127.5} />
  </Screen>
);

export default function App() {
  return (
    <>
      <Global />
      <Page>
        <Paper>
          <filter id="grain" x="0" y="0" width="100%" height="100%" colorInterpolationFilters="sRGB">
            <feTurbulence type="fractalNoise" baseFrequency=".38" numOctaves="3" seed="8" />
            <feColorMatrix type="matrix" values="0 0 0 0 .7  0 0 0 0 .69  0 0 0 0 .65  1.3 0 0 0 -.56" />
          </filter>
          <rect width="660" height="462" fill="#f2f1ec" />
          <rect width="660" height="462" filter="url(#grain)" />
        </Paper>
        <Column><GithubScreen /><NotepadScreen /></Column>
        <Side><LauncherScreen /></Side>
      </Page>
    </>
  );
}
